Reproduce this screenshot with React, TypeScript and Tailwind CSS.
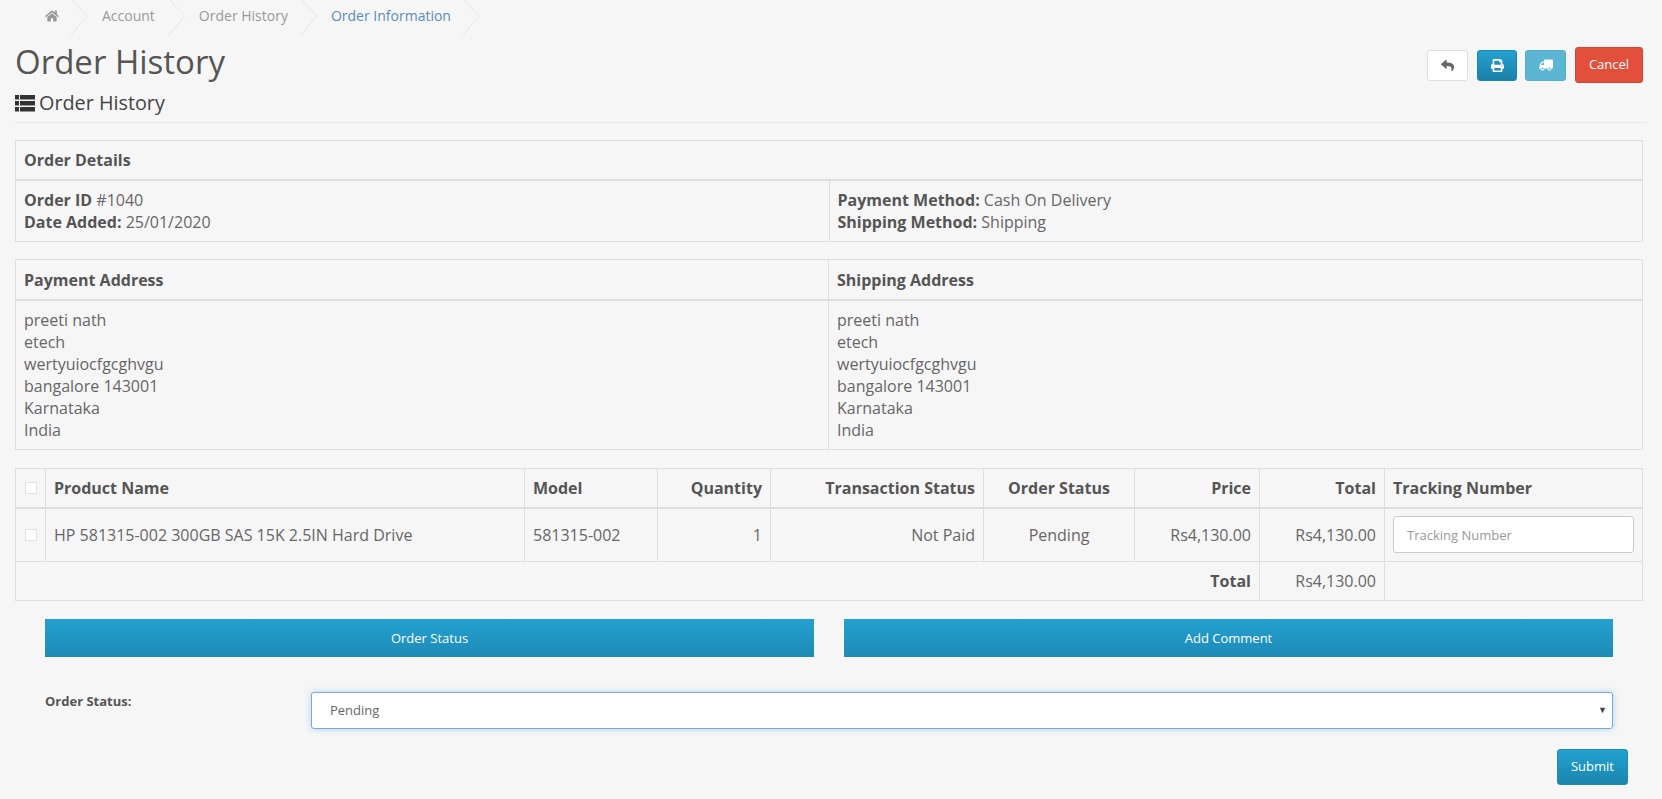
import { FaHome, FaReply, FaPrint, FaTruck } from 'react-icons/fa';

const Chevron = () => (
  <svg width="18" height="36" viewBox="0 0 18 36" fill="none" className="shrink-0">
    <path d="M0 -2 L17 16 L0 36" stroke="#e6e6e6" strokeWidth="1" />
  </svg>
);

const ListIcon = () => (
  <svg width="20" height="17" viewBox="0 0 20 17" fill="#333" className="shrink-0">
    <rect x="0" y="0" width="4" height="4.5" />
    <rect x="5" y="0" width="15" height="4.5" />
    <rect x="0" y="6" width="4" height="4.5" />
    <rect x="5" y="6" width="15" height="4.5" />
    <rect x="0" y="12" width="4" height="4.5" />
    <rect x="5" y="12" width="15" height="4.5" />
  </svg>
);

const tdBase = 'border border-[#dedede] px-2 text-[16px] text-[#666]';
const thBase = 'border border-[#dedede] border-b-2 px-2 text-[16px] font-bold text-[#555]';

const address = ['preeti nath', 'etech', 'wertyuiocfgcghvgu', 'bangalore 143001', 'Karnataka', 'India'];

const Check = () => (
  <span className="block w-3 h-3 mx-auto bg-white border border-[#e2e2e2]"></span>
);

const App = () => {
  return (
    <div className="h-[799px] overflow-hidden bg-[#f6f6f6] font-['Open_Sans',sans-serif] text-[#666]">
      <ul className="flex items-start h-[37px] pl-[45px] text-[14px] leading-[32px] text-[#999]">
        <li className="w-[25px] h-[32px] flex items-center"><FaHome className="text-[14px] text-[#999]" /></li>
        <Chevron />
        <li className="pl-[14px] pr-[13px]">Account</li>
        <Chevron />
        <li className="pl-[13px] pr-[12px]">Order History</li>
        <Chevron />
        <li className="pl-[13px] pr-[11px] text-[#5a8db5]">Order Information</li>
        <Chevron />
      </ul>

      <div className="flex justify-between items-start pl-[15px] pr-[19px]">
        <h1 className="pt-[3px] text-[33px] leading-[44px] text-[#555]">Order History</h1>
        <div className="flex items-center gap-[9px] pt-[10px]">
          <button type="button" className="w-[41px] h-[31px] flex items-center justify-center bg-white border border-[#ddd] rounded-[3px] text-[#666]">
            <FaReply className="text-[13px]" />
          </button>
          <button type="button" className="w-[40px] h-[31px] mr-[-1px] flex items-center justify-center bg-gradient-to-b from-[#23a1d1] to-[#1b80a8] border border-[#1f84ad] rounded-[3px] text-white">
            <FaPrint className="text-[13px]" />
          </button>
          <button type="button" className="w-[41px] h-[31px] flex items-center justify-center bg-[#5bb5d3] border border-[#55adcb] rounded-[3px] text-white">
            <FaTruck className="text-[14px] -scale-x-100" />
          </button>
          <button type="button" className="w-[68px] h-[36px] bg-[#e2503c] border border-[#d4452f] rounded-[3px] text-[13px] text-white">
            Cancel
          </button>
        </div>
      </div>

      <div className="mx-[15px] flex items-center gap-[4px] h-[38px] mt-[1px] border-b border-[#e8e8e8] text-[19.8px] text-[#444] pb-[1px]">
        <ListIcon />
        <span>Order History</span>
      </div>

      <table className="mt-[17px] ml-[15px] w-[1628px] border-collapse table-fixed">
        <thead>
          <tr className="h-[39px]"><th colSpan={2} className={thBase + ' text-left'}>Order Details</th></tr>
        </thead>
        <tbody>
          <tr className="h-[62px]">
            <td className={tdBase + ' w-[816px] pt-[2px] leading-[21.5px]'}>
              <b className="text-[#555]">Order ID</b> #1040<br />
              <b className="text-[#555]">Date Added:</b> 25/01/2020
            </td>
            <td className={tdBase + ' pt-[2px] leading-[21.5px]'}>
              <b className="text-[#555]">Payment Method:</b> Cash On Delivery<br />
              <b className="text-[#555]">Shipping Method:</b> Shipping
            </td>
          </tr>
        </tbody>
      </table>

      <table className="mt-[17px] ml-[15px] w-[1628px] border-collapse table-fixed">
        <thead>
          <tr className="h-[40px]">
            <th className={thBase + ' pt-[2px] text-left w-[813px]'}>Payment Address</th>
            <th className={thBase + ' pt-[2px] text-left'}>Shipping Address</th>
          </tr>
        </thead>
        <tbody>
          <tr className="h-[150px]">
            <td className={tdBase + ' leading-[22px]'}>
              {address.map((line) => <div key={line}>{line}</div>)}
            </td>
            <td className={tdBase + ' leading-[22px]'}>
              {address.map((line) => <div key={line}>{line}</div>)}
            </td>
          </tr>
        </tbody>
      </table>

      <table className="mt-[18px] ml-[15px] w-[1628px] border-collapse table-fixed">
        <thead>
          <tr className="h-[39px]">
            <th className={thBase + ' w-[30px] !px-0'}><Check /></th>
            <th className={thBase + ' w-[479px] text-left'}>Product Name</th>
            <th className={thBase + ' w-[133px] text-left'}>Model</th>
            <th className={thBase + ' w-[113px] text-right'}>Quantity</th>
            <th className={thBase + ' w-[213px] text-right'}>Transaction Status</th>
            <th className={thBase + ' w-[151px] text-center'}>Order Status</th>
            <th className={thBase + ' w-[125px] text-right'}>Price</th>
            <th className={thBase + ' w-[125px] text-right'}>Total</th>
            <th className={thBase + ' text-left'}>Tracking Number</th>
          </tr>
        </thead>
        <tbody>
          <tr className="h-[54px]">
            <td className={tdBase + ' !px-0'}><Check /></td>
            <td className={tdBase}>HP 581315-002 300GB SAS 15K 2.5IN Hard Drive</td>
            <td className={tdBase}>581315-002</td>
            <td className={tdBase + ' text-right'}>1</td>
            <td className={tdBase + ' text-right'}>Not Paid</td>
            <td className={tdBase + ' text-center'}>Pending</td>
            <td className={tdBase + ' text-right'}>Rs4,130.00</td>
            <td className={tdBase + ' text-right'}>Rs4,130.00</td>
            <td className={tdBase}>
              <input
                type="text"
                placeholder="Tracking Number"
                className="block w-full h-[37px] px-[13px] bg-white border border-[#ccc] rounded-[3px] text-[13px] placeholder:text-[#999]"
              />
            </td>
          </tr>
          <tr className="h-[39px]">
            <td colSpan={7} className={tdBase + ' text-right font-bold !text-[#555]'}>Total</td>
            <td className={tdBase + ' text-right'}>Rs4,130.00</td>
            <td className={tdBase}></td>
          </tr>
        </tbody>
      </table>

      <div className="flex gap-[30px] mt-[18px] ml-[45px] w-[1568px]">
        <button type="button" className="flex-1 h-[38px] pt-[2px] bg-gradient-to-b from-[#23a1d1] to-[#1f8ab5] text-[13px] text-white">Order Status</button>
        <button type="button" className="flex-1 h-[38px] pt-[2px] bg-gradient-to-b from-[#23a1d1] to-[#1f8ab5] text-[13px] text-white">Add Comment</button>
      </div>

      <div className="flex items-start mt-[35px] ml-[45px] w-[1568px]">
        <label className="w-[266px] text-[13px] leading-[18px] font-bold text-[#555]">Order Status:</label>
        <div className="relative flex-1 h-[37px] flex items-center pl-[18px] bg-white border border-[#7ba9d6] rounded-[3px] text-[13px] text-[#666] shadow-[0_0_6px_rgba(102,175,233,0.5)]">
          Pending
          <span className="absolute right-[5px] top-[10px] text-[9px] text-[#444]">▼</span>
        </div>
      </div>

      <div className="flex justify-end mt-[20px] mr-[34px]">
        <button type="button" className="w-[71px] h-[36px] bg-gradient-to-b from-[#23a1d1] to-[#1b85ae] border border-[#1f8ab5] rounded-[3px] text-[13px] text-white">Submit</button>
      </div>
    </div>
  );
};

export default App;
